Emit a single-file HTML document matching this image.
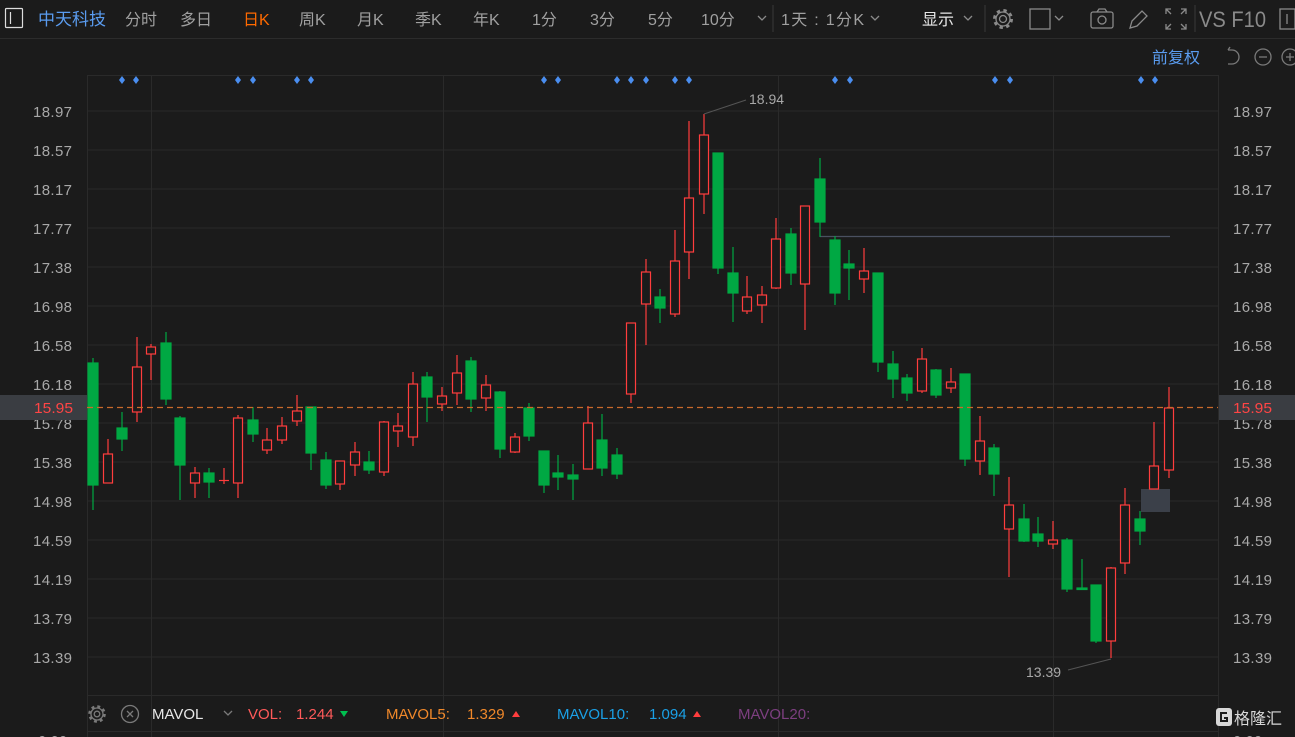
<!DOCTYPE html>
<html><head><meta charset="utf-8"><style>
html,body{margin:0;padding:0;background:#1b1b1b;width:1295px;height:737px;overflow:hidden;font-family:"Liberation Sans","Noto Sans CJK SC",sans-serif}
svg{position:absolute;left:0;top:0}
.g{stroke:#00a843;stroke-width:1.2;fill:#00a843}
.r{stroke:#ff3d3d;stroke-width:1.2;fill:#1b1b1b}
.ax{font-size:15px;fill:#a8a8a8}
.hd{font-size:16px;fill:#a0a0a0}
</style></head><body>
<svg width="1295" height="737" viewBox="0 0 1295 737" xmlns="http://www.w3.org/2000/svg">
<rect width="1295" height="737" fill="#1b1b1b"/>
<!-- header -->
<rect x="5.5" y="8.5" width="17" height="19" fill="none" stroke="#ddd" stroke-width="1.2" rx="1"/>
<line x1="10.5" y1="12" x2="10.5" y2="24" stroke="#ddd" stroke-width="1.2"/>
<text x="38" y="25" font-size="17" fill="#5a9cf0">中天科技</text>
<g class="hd">
<text x="125" y="25">分时</text><text x="180" y="25">多日</text>
<text x="243" y="25" fill="#ff6a00">日K</text>
<text x="299" y="25">周K</text><text x="357" y="25">月K</text><text x="415" y="25">季K</text><text x="473" y="25">年K</text>
<text x="532" y="25">1分</text><text x="590" y="25">3分</text><text x="648" y="25">5分</text><text x="701" y="25">10分</text>
<text x="781" y="25" textLength="83">1天 : 1分K</text>
<text x="922" y="25" fill="#e8e8e8">显示</text>
<text x="1199" y="27" font-size="22" textLength="67" lengthAdjust="spacingAndGlyphs" fill="#8a8a8a">VS F10</text>
</g>
<g fill="none" stroke="#8a8a8a" stroke-width="1.3">
<path d="M758 16l4 4 4-4"/><path d="M871 16l4 4 4-4"/><path d="M964 16l4 4 4-4"/><path d="M1055 16l4 4 4-4"/>
<line x1="773" y1="5" x2="773" y2="32" stroke="#333"/><line x1="985" y1="5" x2="985" y2="32" stroke="#333"/><line x1="1195" y1="5" x2="1195" y2="32" stroke="#333"/>
<circle cx="1003" cy="19" r="3.5"/><circle cx="1003" cy="19" r="8.5" stroke-width="3" stroke-dasharray="3.3 3.4"/><circle cx="1003" cy="19" r="7"/>
<rect x="1030" y="9" width="20" height="20"/>
<rect x="1091" y="12" width="22" height="16" rx="2"/><circle cx="1102" cy="20" r="4"/><path d="M1097 12l2-3h6l2 3"/>
<path d="M1130 28l2-7 10-10 5 5-10 10z"/>
<path d="M1166 14v-5h5M1181 9h5v5M1186 24v5h-5M1171 29h-5v-5M1166 9l5 5M1186 9l-5 5M1186 29l-5-5M1166 29l5-5"/>
<rect x="1280" y="9" width="15" height="20"/><line x1="1287" y1="14" x2="1287" y2="24"/>
</g>
<line x1="0" y1="38.5" x2="1295" y2="38.5" stroke="#2c2c2c"/>
<text x="1152" y="63" font-size="16" fill="#5a9cf0">前复权</text>
<g fill="none" stroke="#7a7a7a" stroke-width="1.3">
<path d="M1228 50h4a7 7 0 0 1 0 14h-4"/><path d="M1228 50l2-3"/>
<circle cx="1263" cy="57" r="8"/><line x1="1259" y1="57" x2="1267" y2="57"/>
<circle cx="1290" cy="57" r="8"/><line x1="1286" y1="57" x2="1294" y2="57"/><line x1="1290" y1="53" x2="1290" y2="61"/>
</g>
<!-- grid -->
<g stroke="#2a2a2a" stroke-width="1">
<line x1="87" y1="75.5" x2="1218" y2="75.5"/>
<line x1="87" y1="111" x2="1218" y2="111"/><line x1="87" y1="150" x2="1218" y2="150"/><line x1="87" y1="189" x2="1218" y2="189"/><line x1="87" y1="228" x2="1218" y2="228"/><line x1="87" y1="267" x2="1218" y2="267"/><line x1="87" y1="306" x2="1218" y2="306"/><line x1="87" y1="345" x2="1218" y2="345"/><line x1="87" y1="384" x2="1218" y2="384"/><line x1="87" y1="423" x2="1218" y2="423"/><line x1="87" y1="462" x2="1218" y2="462"/><line x1="87" y1="501" x2="1218" y2="501"/><line x1="87" y1="540" x2="1218" y2="540"/><line x1="87" y1="579" x2="1218" y2="579"/><line x1="87" y1="618" x2="1218" y2="618"/><line x1="87" y1="657" x2="1218" y2="657"/>
<line x1="87.5" y1="75" x2="87.5" y2="737"/><line x1="151.5" y1="75" x2="151.5" y2="737"/><line x1="443.5" y1="75" x2="443.5" y2="737"/><line x1="778.5" y1="75" x2="778.5" y2="737"/><line x1="1053.5" y1="75" x2="1053.5" y2="737"/><line x1="1218.5" y1="75" x2="1218.5" y2="737"/>
<line x1="87" y1="695.5" x2="1218" y2="695.5"/><line x1="87" y1="731.5" x2="1218" y2="731.5"/>
</g>
<!-- axis labels -->
<g class="ax" lengthAdjust="spacingAndGlyphs">
<text x="33" y="117" textLength="39">18.97</text><text x="33" y="156" textLength="39">18.57</text><text x="33" y="195" textLength="39">18.17</text><text x="33" y="234" textLength="39">17.77</text><text x="33" y="273" textLength="39">17.38</text><text x="33" y="312" textLength="39">16.98</text><text x="33" y="351" textLength="39">16.58</text><text x="33" y="390" textLength="39">16.18</text><text x="33" y="429" textLength="39">15.78</text><text x="33" y="468" textLength="39">15.38</text><text x="33" y="507" textLength="39">14.98</text><text x="33" y="546" textLength="39">14.59</text><text x="33" y="585" textLength="39">14.19</text><text x="33" y="624" textLength="39">13.79</text><text x="33" y="663" textLength="39">13.39</text>
<text x="1233" y="117" textLength="39">18.97</text><text x="1233" y="156" textLength="39">18.57</text><text x="1233" y="195" textLength="39">18.17</text><text x="1233" y="234" textLength="39">17.77</text><text x="1233" y="273" textLength="39">17.38</text><text x="1233" y="312" textLength="39">16.98</text><text x="1233" y="351" textLength="39">16.58</text><text x="1233" y="390" textLength="39">16.18</text><text x="1233" y="429" textLength="39">15.78</text><text x="1233" y="468" textLength="39">15.38</text><text x="1233" y="507" textLength="39">14.98</text><text x="1233" y="546" textLength="39">14.59</text><text x="1233" y="585" textLength="39">14.19</text><text x="1233" y="624" textLength="39">13.79</text><text x="1233" y="663" textLength="39">13.39</text>
<text x="38" y="746">0.00</text><text x="1233" y="746">0.00</text>
</g>
<rect x="0" y="395" width="87" height="25" fill="#3a3d42"/>
<rect x="1219" y="395" width="76" height="25" fill="#3a3d42"/>
<text x="34" y="413" font-size="15" fill="#ff4545" textLength="39" lengthAdjust="spacingAndGlyphs">15.95</text>
<text x="1233" y="413" font-size="15" fill="#ff4545" textLength="39" lengthAdjust="spacingAndGlyphs">15.95</text>
<!-- diamonds -->
<g fill="#4a8ef0">
<path d="M122 76l3 4-3 4-3-4z"/><path d="M136 76l3 4-3 4-3-4z"/><path d="M238 76l3 4-3 4-3-4z"/><path d="M253 76l3 4-3 4-3-4z"/><path d="M297 76l3 4-3 4-3-4z"/><path d="M311 76l3 4-3 4-3-4z"/><path d="M544 76l3 4-3 4-3-4z"/><path d="M558 76l3 4-3 4-3-4z"/><path d="M617 76l3 4-3 4-3-4z"/><path d="M631 76l3 4-3 4-3-4z"/><path d="M646 76l3 4-3 4-3-4z"/><path d="M675 76l3 4-3 4-3-4z"/><path d="M689 76l3 4-3 4-3-4z"/><path d="M835 76l3 4-3 4-3-4z"/><path d="M850 76l3 4-3 4-3-4z"/><path d="M995 76l3 4-3 4-3-4z"/><path d="M1010 76l3 4-3 4-3-4z"/><path d="M1141 76l3 4-3 4-3-4z"/><path d="M1155 76l3 4-3 4-3-4z"/>
</g>
<line x1="820" y1="236.5" x2="1170" y2="236.5" stroke="#4a5060" stroke-width="1.2"/>
<!-- candles -->
<g class="g"><line x1="93" y1="358" x2="93" y2="510"/><rect x="88" y="363" width="10" height="122"/></g>
<g class="r"><line x1="108" y1="439" x2="108" y2="483"/><rect x="103.5" y="454" width="9" height="29"/></g>
<g class="g"><line x1="122" y1="412" x2="122" y2="451"/><rect x="117" y="428" width="10" height="11"/></g>
<g class="r"><line x1="137" y1="337" x2="137" y2="422"/><rect x="132.5" y="367" width="9" height="45"/></g>
<g class="r"><line x1="151" y1="344" x2="151" y2="380"/><rect x="146.5" y="347" width="9" height="7"/></g>
<g class="g"><line x1="166" y1="332" x2="166" y2="405"/><rect x="161" y="343" width="10" height="56"/></g>
<g class="g"><line x1="180" y1="416" x2="180" y2="500"/><rect x="175" y="418" width="10" height="47"/></g>
<g class="r"><line x1="195" y1="467" x2="195" y2="498"/><rect x="190.5" y="473" width="9" height="10"/></g>
<g class="g"><line x1="209" y1="468" x2="209" y2="498"/><rect x="204" y="473" width="10" height="9"/></g>
<g class="r"><line x1="224" y1="468" x2="224" y2="484"/><line x1="219" y1="480.5" x2="229" y2="480.5"/></g>
<g class="r"><line x1="238" y1="415" x2="238" y2="498"/><rect x="233.5" y="418" width="9" height="65"/></g>
<g class="g"><line x1="253" y1="407" x2="253" y2="442"/><rect x="248" y="420" width="10" height="14"/></g>
<g class="r"><line x1="267" y1="428" x2="267" y2="454"/><rect x="262.5" y="440" width="9" height="10"/></g>
<g class="r"><line x1="282" y1="417" x2="282" y2="444"/><rect x="277.5" y="426" width="9" height="14"/></g>
<g class="r"><line x1="297" y1="395" x2="297" y2="426"/><rect x="292.5" y="411" width="9" height="10"/></g>
<g class="g"><line x1="311" y1="407" x2="311" y2="470"/><rect x="306" y="407" width="10" height="46"/></g>
<g class="g"><line x1="326" y1="452" x2="326" y2="489"/><rect x="321" y="460" width="10" height="25"/></g>
<g class="r"><line x1="340" y1="461" x2="340" y2="490"/><rect x="335.5" y="461" width="9" height="23"/></g>
<g class="r"><line x1="355" y1="442" x2="355" y2="476"/><rect x="350.5" y="452" width="9" height="13"/></g>
<g class="g"><line x1="369" y1="451" x2="369" y2="474"/><rect x="364" y="462" width="10" height="8"/></g>
<g class="r"><line x1="384" y1="421" x2="384" y2="476"/><rect x="379.5" y="422" width="9" height="50"/></g>
<g class="r"><line x1="398" y1="413" x2="398" y2="447"/><rect x="393.5" y="426" width="9" height="5"/></g>
<g class="r"><line x1="413" y1="372" x2="413" y2="446"/><rect x="408.5" y="384" width="9" height="53"/></g>
<g class="g"><line x1="427" y1="372" x2="427" y2="422"/><rect x="422" y="377" width="10" height="20"/></g>
<g class="r"><line x1="442" y1="387" x2="442" y2="411"/><rect x="437.5" y="396" width="9" height="8"/></g>
<g class="r"><line x1="457" y1="355" x2="457" y2="405"/><rect x="452.5" y="373" width="9" height="20"/></g>
<g class="g"><line x1="471" y1="357" x2="471" y2="412"/><rect x="466" y="361" width="10" height="38"/></g>
<g class="r"><line x1="486" y1="375" x2="486" y2="411"/><rect x="481.5" y="385" width="9" height="13"/></g>
<g class="g"><line x1="500" y1="391" x2="500" y2="458"/><rect x="495" y="392" width="10" height="57"/></g>
<g class="r"><line x1="515" y1="433" x2="515" y2="453"/><rect x="510.5" y="437" width="9" height="15"/></g>
<g class="g"><line x1="529" y1="403" x2="529" y2="441"/><rect x="524" y="408" width="10" height="28"/></g>
<g class="g"><line x1="544" y1="451" x2="544" y2="493"/><rect x="539" y="451" width="10" height="34"/></g>
<g class="g"><line x1="558" y1="455" x2="558" y2="490"/><rect x="553" y="473" width="10" height="4"/></g>
<g class="g"><line x1="573" y1="464" x2="573" y2="500"/><rect x="568" y="475" width="10" height="4"/></g>
<g class="r"><line x1="588" y1="406" x2="588" y2="469"/><rect x="583.5" y="423" width="9" height="46"/></g>
<g class="g"><line x1="602" y1="414" x2="602" y2="476"/><rect x="597" y="440" width="10" height="28"/></g>
<g class="g"><line x1="617" y1="448" x2="617" y2="479"/><rect x="612" y="455" width="10" height="19"/></g>
<g class="r"><line x1="631" y1="323" x2="631" y2="403"/><rect x="626.5" y="323" width="9" height="71"/></g>
<g class="r"><line x1="646" y1="259" x2="646" y2="345"/><rect x="641.5" y="272" width="9" height="32"/></g>
<g class="g"><line x1="660" y1="289" x2="660" y2="323"/><rect x="655" y="297" width="10" height="11"/></g>
<g class="r"><line x1="675" y1="230" x2="675" y2="317"/><rect x="670.5" y="261" width="9" height="53"/></g>
<g class="r"><line x1="689" y1="121" x2="689" y2="279"/><rect x="684.5" y="198" width="9" height="54"/></g>
<g class="r"><line x1="704" y1="114" x2="704" y2="214"/><rect x="699.5" y="135" width="9" height="59"/></g>
<g class="g"><line x1="718" y1="153" x2="718" y2="274"/><rect x="713" y="153" width="10" height="115"/></g>
<g class="g"><line x1="733" y1="247" x2="733" y2="322"/><rect x="728" y="273" width="10" height="20"/></g>
<g class="r"><line x1="747" y1="276" x2="747" y2="314"/><rect x="742.5" y="297" width="9" height="14"/></g>
<g class="r"><line x1="762" y1="286" x2="762" y2="323"/><rect x="757.5" y="295" width="9" height="10"/></g>
<g class="r"><line x1="776" y1="218" x2="776" y2="289"/><rect x="771.5" y="239" width="9" height="49"/></g>
<g class="g"><line x1="791" y1="228" x2="791" y2="285"/><rect x="786" y="234" width="10" height="39"/></g>
<g class="r"><line x1="805" y1="206" x2="805" y2="330"/><rect x="800.5" y="206" width="9" height="78"/></g>
<g class="g"><line x1="820" y1="158" x2="820" y2="237"/><rect x="815" y="179" width="10" height="43"/></g>
<g class="g"><line x1="835" y1="236" x2="835" y2="305"/><rect x="830" y="240" width="10" height="53"/></g>
<g class="g"><line x1="849" y1="250" x2="849" y2="300"/><rect x="844" y="264" width="10" height="4"/></g>
<g class="r"><line x1="864" y1="248" x2="864" y2="293"/><rect x="859.5" y="271" width="9" height="8"/></g>
<g class="g"><line x1="878" y1="273" x2="878" y2="372"/><rect x="873" y="273" width="10" height="89"/></g>
<g class="g"><line x1="893" y1="351" x2="893" y2="398"/><rect x="888" y="364" width="10" height="15"/></g>
<g class="g"><line x1="907" y1="374" x2="907" y2="401"/><rect x="902" y="378" width="10" height="15"/></g>
<g class="r"><line x1="922" y1="348" x2="922" y2="393"/><rect x="917.5" y="359" width="9" height="32"/></g>
<g class="g"><line x1="936" y1="369" x2="936" y2="398"/><rect x="931" y="370" width="10" height="25"/></g>
<g class="r"><line x1="951" y1="368" x2="951" y2="393"/><rect x="946.5" y="382" width="9" height="6"/></g>
<g class="g"><line x1="965" y1="374" x2="965" y2="466"/><rect x="960" y="374" width="10" height="85"/></g>
<g class="r"><line x1="980" y1="416" x2="980" y2="475"/><rect x="975.5" y="441" width="9" height="20"/></g>
<g class="g"><line x1="994" y1="444" x2="994" y2="496"/><rect x="989" y="448" width="10" height="26"/></g>
<g class="r"><line x1="1009" y1="477" x2="1009" y2="577"/><rect x="1004.5" y="505" width="9" height="24"/></g>
<g class="g"><line x1="1024" y1="504" x2="1024" y2="542"/><rect x="1019" y="519" width="10" height="22"/></g>
<g class="g"><line x1="1038" y1="517" x2="1038" y2="547"/><rect x="1033" y="534" width="10" height="7"/></g>
<g class="r"><line x1="1053" y1="521" x2="1053" y2="549"/><rect x="1048.5" y="540" width="9" height="4"/></g>
<g class="g"><line x1="1067" y1="538" x2="1067" y2="592"/><rect x="1062" y="540" width="10" height="49"/></g>
<g class="g"><line x1="1082" y1="559" x2="1082" y2="590"/><rect x="1077" y="588" width="10" height="1.5"/></g>
<g class="g"><line x1="1096" y1="585" x2="1096" y2="643"/><rect x="1091" y="585" width="10" height="56"/></g>
<g class="r"><line x1="1111" y1="567" x2="1111" y2="658"/><rect x="1106.5" y="568" width="9" height="73"/></g>
<g class="r"><line x1="1125" y1="488" x2="1125" y2="574"/><rect x="1120.5" y="505" width="9" height="58"/></g>
<rect x="1141" y="489" width="29" height="23" fill="#3b4049"/>
<g class="g"><line x1="1140" y1="511" x2="1140" y2="545"/><rect x="1135" y="519" width="10" height="12"/></g>
<g class="r"><line x1="1154" y1="422" x2="1154" y2="489"/><rect x="1149.5" y="466" width="9" height="23"/></g>
<g class="r"><line x1="1169" y1="387" x2="1169" y2="478"/><rect x="1164.5" y="408" width="9" height="62"/></g>
<line x1="87" y1="407.5" x2="1218" y2="407.5" stroke="#c96a2b" stroke-width="1.2" stroke-dasharray="6,4"/>
<line x1="704" y1="114" x2="746" y2="100" stroke="#555" stroke-width="1"/>
<text x="749" y="104" font-size="14" fill="#a8a8a8">18.94</text>
<line x1="1068" y1="670" x2="1111" y2="659" stroke="#555" stroke-width="1"/>
<text x="1026" y="677" font-size="14" fill="#a8a8a8">13.39</text>
<!-- bottom bar -->
<g fill="none" stroke="#7a7a7a" stroke-width="1.3">
<circle cx="97" cy="714" r="2.8"/><circle cx="97" cy="714" r="7.5" stroke-width="2.6" stroke-dasharray="2.9 3"/><circle cx="97" cy="714" r="6"/>
<circle cx="130" cy="714" r="8.5"/><path d="M127 711l6 6M133 711l-6 6"/>
<path d="M224 711l4 4 4-4"/>
</g>
<g font-size="15">
<text x="152" y="719" fill="#e8e8e8">MAVOL</text>
<text x="248" y="719" fill="#ff5a5a">VOL:</text><text x="296" y="719" fill="#ff5a5a">1.244</text>
<text x="386" y="719" fill="#f0882a">MAVOL5:</text><text x="467" y="719" fill="#f0882a">1.329</text>
<text x="557" y="719" fill="#1aa0e6">MAVOL10:</text><text x="649" y="719" fill="#1aa0e6">1.094</text>
<text x="738" y="719" fill="#7d3f80">MAVOL20:</text>
</g>
<path d="M340 711h8l-4 6z" fill="#00c050"/>
<path d="M512 717h8l-4-6z" fill="#ff3d3d"/>
<path d="M693 717h8l-4-6z" fill="#ff3d3d"/>
<rect x="1216" y="708" width="16" height="18" rx="3" fill="#d8d8d8"/>
<path d="M1227 713h-6v8h6v-3h-3" stroke="#1b1b1b" stroke-width="2" fill="none"/>
<text x="1234" y="724" font-size="16" fill="#d8d8d8">格隆汇</text>
</svg>
</body></html>
